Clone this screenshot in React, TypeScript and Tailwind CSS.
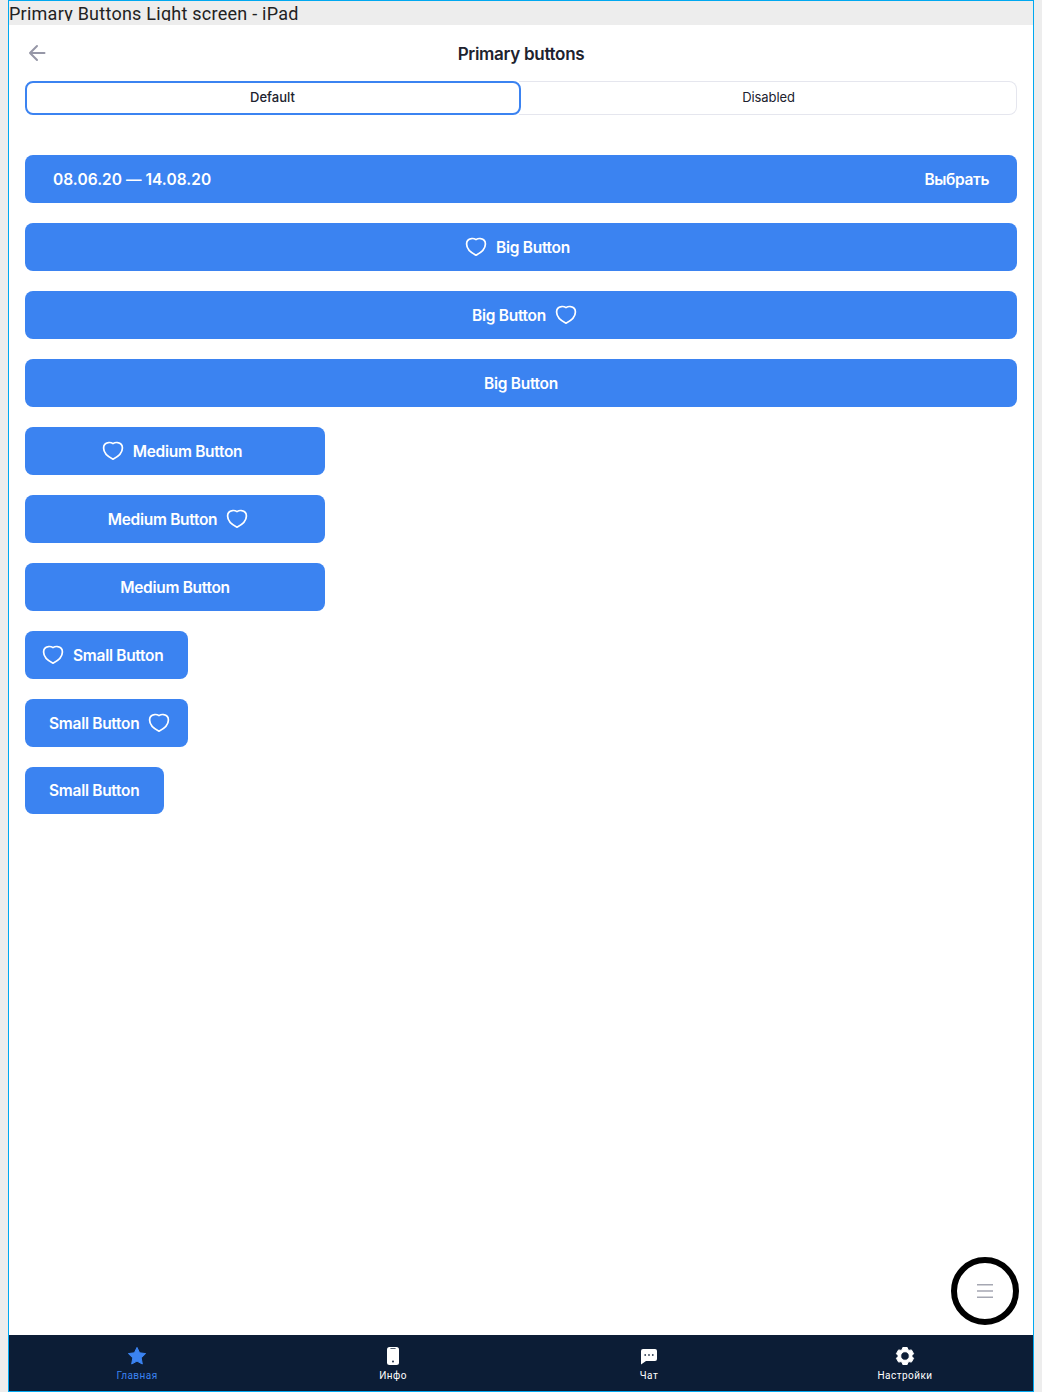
import React from "react";

function Heart() {
  return (
    <svg className="h-6 w-6 shrink-0" viewBox="0 0 24 24" fill="none" stroke="currentColor" strokeWidth="1.7" strokeLinejoin="round" strokeLinecap="round">
      <path d="M12 4.6C10.6 3.7 8.9 3.3 7.3 3.6C4.5 4 2.6 6.1 2.6 9C2.6 14 7.2 17.8 12 20.2C16.8 17.8 21.4 14 21.4 9C21.4 6.1 19.5 4 16.7 3.6C15.1 3.3 13.4 3.7 12 4.6Z" />
    </svg>
  );
}

type ButtonProps = { label: string; icon?: "left" | "right"; className: string };

function PrimaryButton({ label, icon, className }: ButtonProps) {
  return (
    <button className={`flex shrink-0 items-center justify-center rounded-lg bg-[#3b83f1] font-semibold text-white ${className}`}>
      {icon === "left" && <span className="mr-2 -mt-px"><Heart /></span>}
      <span className="whitespace-nowrap pt-0.5 text-[15.5px] leading-6 tracking-[-0.3px]">{label}</span>
      {icon === "right" && <span className="ml-2 -mt-px"><Heart /></span>}
    </button>
  );
}

const tabs = [
  {
    label: "Главная",
    className: "text-[#3b83f1]",
    icon: <path d="M10 1.4L12.6 6.8L18.6 7.6L14.2 11.9L15.3 18L10 15.1L4.7 18L5.8 11.9L1.4 7.6L7.4 6.8Z" fill="currentColor" stroke="currentColor" strokeWidth="1" strokeLinejoin="round" />,
  },
  {
    label: "Инфо",
    className: "text-white",
    icon: (
      <>
        <rect x="4" y="1" width="12" height="18" rx="2.5" fill="currentColor" />
        <path d="M7.8 2.5h4.4" stroke="#0c1d36" strokeOpacity="0.7" strokeWidth="1" strokeLinecap="round" />
        <circle cx="10" cy="15.5" r="0.9" fill="#0c1d36" />
      </>
    ),
  },
  {
    label: "Чат",
    className: "text-white",
    icon: (
      <>
        <path d="M4 3h12a2 2 0 0 1 2 2v8a2 2 0 0 1-2 2H7l-5 3.5V5a2 2 0 0 1 2-2Z" fill="currentColor" />
        <g fill="#0c1d36" fillOpacity="0.85"><circle cx="6.2" cy="9" r="0.9" /><circle cx="10" cy="9" r="0.9" /><circle cx="13.8" cy="9" r="0.9" /></g>
      </>
    ),
  },
  {
    label: "Настройки",
    className: "text-white",
    icon: (
      <path fillRule="evenodd" fill="currentColor" stroke="currentColor" strokeWidth="1" strokeLinejoin="round" d="M7.8 1.5H12.2L13 3.8L14 4.4L16.4 3.9L18.6 7.7L17 9.4V10.6L18.6 12.3L16.4 16.1L14 15.6L13 16.2L12.2 18.5H7.8L7 16.2L6 15.6L3.6 16.1L1.4 12.3L3 10.6V9.4L1.4 7.7L3.6 3.9L6 4.4L7 3.8ZM10 5.7A4.3 4.3 0 1 0 10 14.3A4.3 4.3 0 1 0 10 5.7Z" />
    ),
  },
];

export default function App() {
  return (
    <div className="h-[1392px] w-[1042px] overflow-hidden bg-[#ededed] pl-2 font-['Inter',sans-serif] text-[#20222e]">
      <div className="relative flex h-full w-[1026px] flex-col border border-[#00a8f0] bg-white">
        <div className="h-6 shrink-0 bg-[#ededed]">
          <div className="h-5 overflow-hidden whitespace-nowrap font-['Roboto',sans-serif] text-lg leading-[26px] tracking-[0.25px] text-[#222]">Primary Buttons Light screen - iPad</div>
        </div>
        <header className="grid h-14 shrink-0 grid-cols-[56px_1fr_56px] items-center">
          <button aria-label="Back" className="pl-4 text-[#9697a7]">
            <svg className="h-6 w-6" viewBox="0 0 24 24" fill="none" stroke="currentColor" strokeWidth="2" strokeLinecap="round" strokeLinejoin="round">
              <path d="M19.5 12H5M12 5L5 12L12 19" />
            </svg>
          </button>
          <h1 className="pt-0.5 text-center text-[17px] font-semibold leading-6 tracking-[-0.3px]">Primary buttons</h1>
        </header>
        <div className="mx-4 flex h-[34px] shrink-0 rounded-lg text-[13px] font-medium leading-[18px]">
          <button className="h-full flex-1 rounded-lg border-2 border-[#3b83f1] pb-0.5 pr-px">Default</button>
          <button className="-ml-2 h-full w-[504px] rounded-r-lg border border-l-0 border-[#e5e6ee] pb-0.5 pl-2 font-normal tracking-[-0.08px] [clip-path:inset(0_0_0_6px)]">Disabled</button>
        </div>
        <main className="mt-10 flex flex-1 flex-col items-start gap-5 px-4">
          <button className="flex h-12 w-full shrink-0 items-center justify-between rounded-lg bg-[#3b83f1] px-7 pt-0.5 text-[15.5px] font-semibold leading-6 text-white">
            <span className="tracking-[0.03px]">08.06.20 — 14.08.20</span>
            <span className="tracking-[-0.4px]">Выбрать</span>
          </button>
          <PrimaryButton label="Big Button" icon="left" className="h-12 w-full pr-2" />
          <PrimaryButton label="Big Button" icon="right" className="h-12 w-full pl-2" />
          <PrimaryButton label="Big Button" className="h-12 w-full" />
          <PrimaryButton label="Medium Button" icon="left" className="h-12 w-[300px] pr-[7px]" />
          <PrimaryButton label="Medium Button" icon="right" className="h-12 w-[300px] pl-[7px]" />
          <PrimaryButton label="Medium Button" className="h-12 w-[300px]" />
          <PrimaryButton label="Small Button" icon="left" className="h-12 w-[162.5px] pr-2" />
          <PrimaryButton label="Small Button" icon="right" className="h-12 w-[162.5px] pl-2" />
          <PrimaryButton label="Small Button" className="h-[47px] w-[138.5px] pb-px" />
        </main>
        <button aria-label="Menu" className="absolute bottom-[66px] right-[14px] flex h-[68px] w-[68px] items-center justify-center rounded-full border-[6px] border-black bg-white text-[#a5a7b2]">
          <svg className="h-6 w-6" viewBox="0 0 24 24" stroke="currentColor" strokeWidth="1.5">
            <path d="M4 5.7h16M4 12h16M4 18.3h16" />
          </svg>
        </button>
        <nav className="grid h-14 shrink-0 grid-cols-4 bg-[#0c1d36]">
          {tabs.map((tab) => (
            <button key={tab.label} className={`flex flex-col items-center pt-[11px] ${tab.className}`}>
              <svg className="h-5 w-5" viewBox="0 0 20 20" fill="none">{tab.icon}</svg>
              <span className="mt-0.5 font-['Roboto',sans-serif] text-[10px] leading-4 tracking-[0.45px]">{tab.label}</span>
            </button>
          ))}
        </nav>
      </div>
    </div>
  );
}
